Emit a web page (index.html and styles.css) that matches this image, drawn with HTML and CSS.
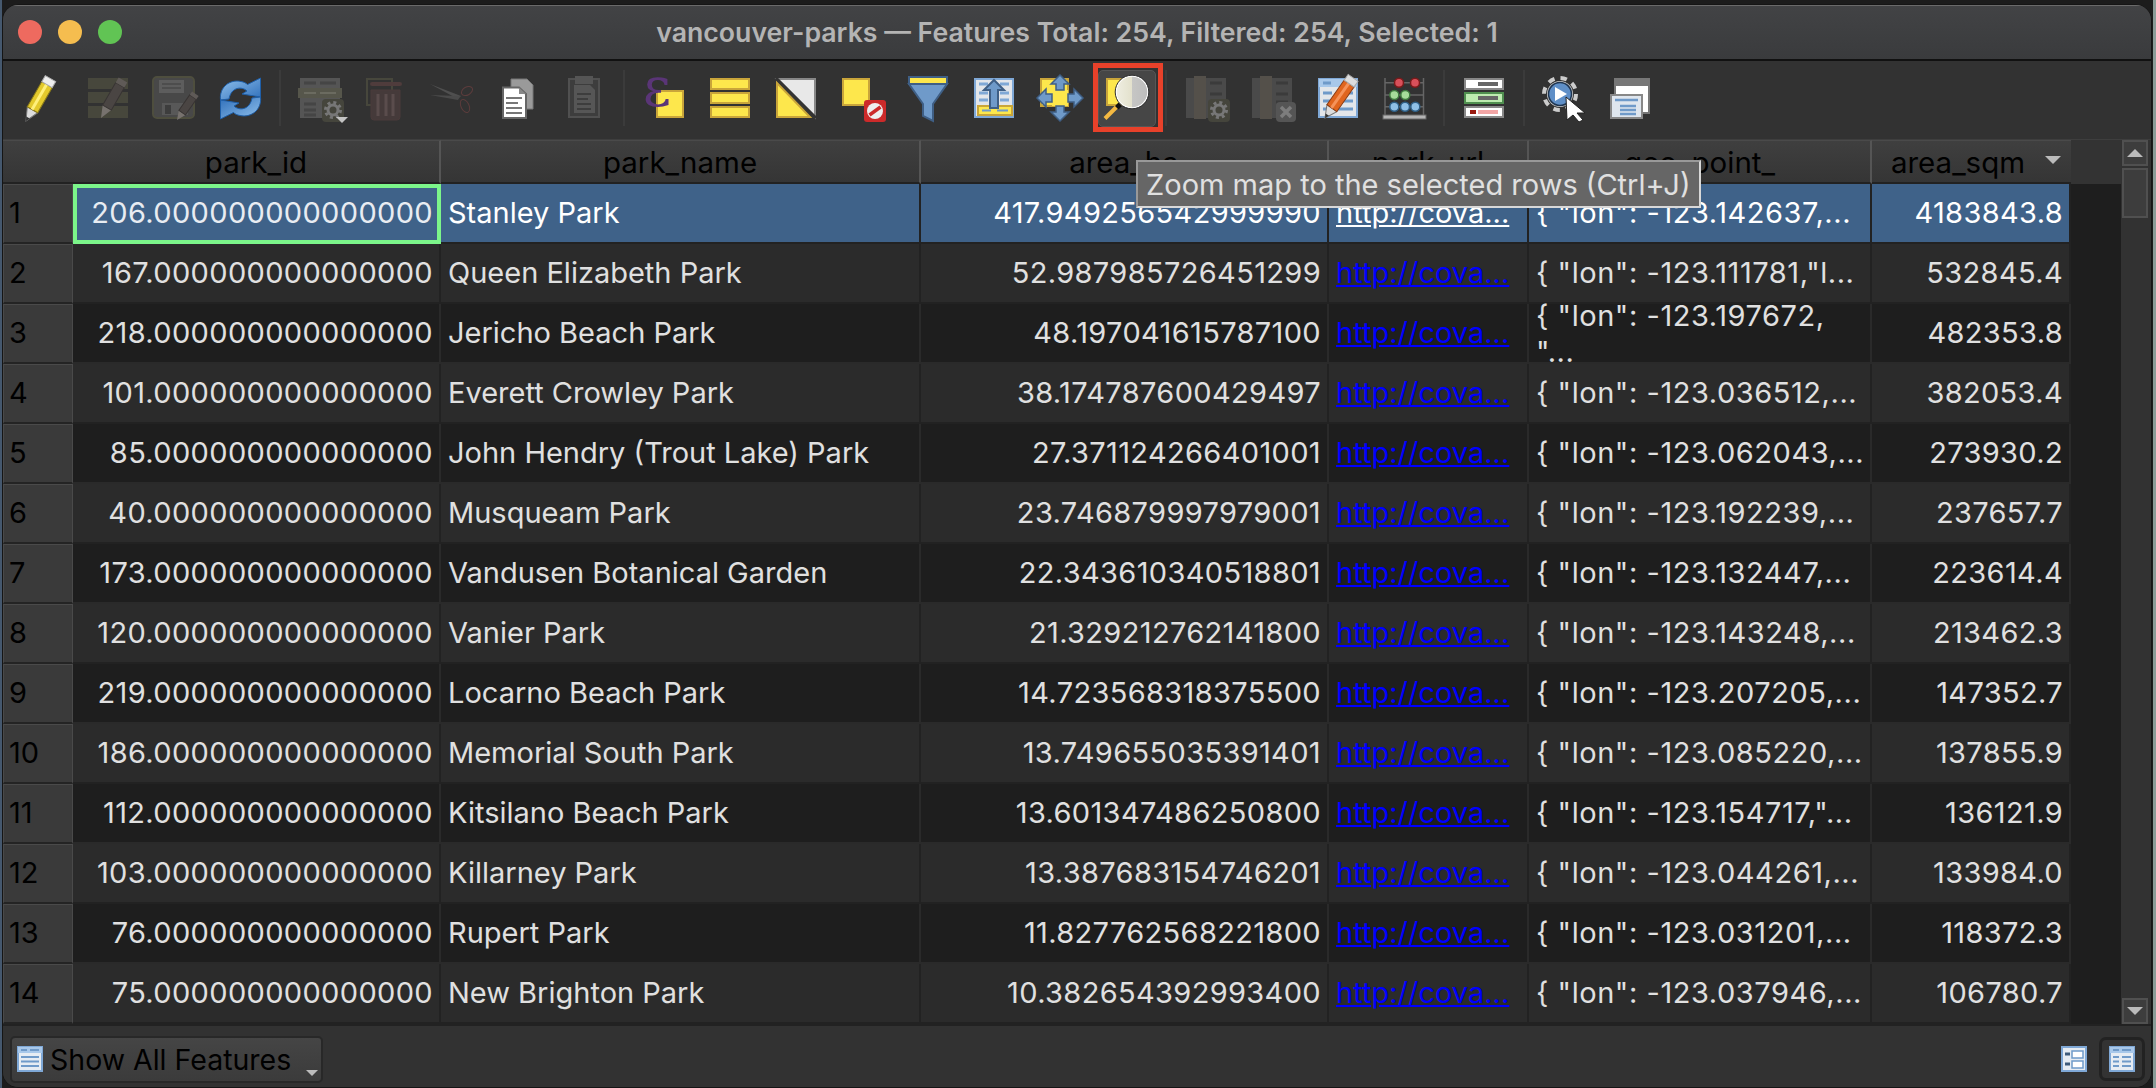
FILE: index.html
```html
<!DOCTYPE html>
<html lang="en">
  <head>
    <meta charset="UTF-8" />
    <title>vancouver-parks — Features Total: 254, Filtered: 254, Selected: 1</title>
    <link rel="stylesheet" href="styles.css">
  </head>
  <body>
    <div class="window">
      <div class="titlebar">
        <div class="lights">
          <span class="light red"></span>
          <span class="light yellow"></span>
          <span class="light green"></span>
        </div>
        <div class="title">vancouver-parks — Features Total: 254, Filtered: 254, Selected: 1</div>
      </div>

      <div class="toolbar">
        <!-- toggle editing -->
        <div class="tool"><svg class="ico" viewBox="0 0 48 48">
          <g transform="translate(8 47) rotate(30)">
            <path d="M0 0L-6 -13H6Z" fill="#ddd" stroke="#777"/>
            <path d="M0 0L-2 -4H2Z" fill="#333"/>
            <rect x="-6" y="-42" width="12" height="29" fill="#e3c92c" stroke="#8a7a1a"/>
            <rect x="-2" y="-42" width="3" height="29" fill="#fff07a"/>
            <rect x="-6" y="-49" width="12" height="7" fill="#eee" stroke="#aaa"/>
          </g>
        </svg></div>
        <!-- multi edit -->
        <div class="tool"><svg class="ico" viewBox="0 0 48 48">
          <rect x="4" y="4" width="40" height="11" fill="#47473c"/>
          <rect x="4" y="18" width="40" height="11" fill="#47473c"/>
          <rect x="4" y="32" width="40" height="12" fill="#47473c"/>
          <g transform="translate(17 44) rotate(30)">
            <path d="M0 0L-5 -12H5Z" fill="#77726e"/>
            <rect x="-5" y="-38" width="10" height="26" fill="#4a4543" stroke="#383433"/>
            <rect x="-5" y="-44" width="10" height="6" fill="#5f5a57"/>
          </g>
        </svg></div>
        <!-- save edits -->
        <div class="tool"><svg class="ico" viewBox="0 0 48 48">
          <rect x="3" y="3" width="41" height="41" rx="4" fill="#484848" stroke="#4e4e3e" stroke-width="2"/>
          <rect x="9" y="6" width="25" height="13" fill="#5d5d5d"/>
          <path d="M12 10H31M12 14H31" stroke="#484848" stroke-width="1.5"/>
          <rect x="12" y="29" width="26" height="12" fill="#585858"/>
          <rect x="15" y="31" width="6" height="9" fill="#3d3d3d"/>
          <g transform="translate(27 46) rotate(35)">
            <path d="M0 0L-4 -9H4Z" fill="#77726e"/>
            <rect x="-4" y="-28" width="8" height="19" fill="#4a4543" stroke="#383433"/>
            <rect x="-4" y="-32" width="8" height="4" fill="#5f5a57"/>
          </g>
        </svg></div>
        <!-- reload -->
        <div class="tool"><svg class="ico" viewBox="0 0 48 48">
          <defs>
            <linearGradient id="refresh" x1="0" y1="0" x2="1" y2="1">
              <stop offset="0" stop-color="#8fc0ec"/>
              <stop offset="1" stop-color="#2f6fba"/>
            </linearGradient>
          </defs>
          <path d="M4.500 26C3 13 14 5 25 7.500C28 8 30 9 31.500 10.500L44.500 4V23L26 20L31 17C26 12 15 13 13 25Z" fill="url(#refresh)" stroke="#1f5fa8"/>
          <g transform="rotate(180 24.500 24.500)">
            <path d="M4.500 26C3 13 14 5 25 7.500C28 8 30 9 31.500 10.500L44.500 4V23L26 20L31 17C26 12 15 13 13 25Z" fill="url(#refresh)" stroke="#1f5fa8"/>
          </g>
        </svg></div>
        <div class="sep"></div>
        <!-- add feature -->
        <div class="tool"><svg class="ico" viewBox="0 0 48 48">
          <rect x="4" y="4" width="40" height="40" fill="#555"/>
          <path d="M8 9H20M24 9H40M8 30H20M8 36H20M8 41H20" stroke="#454545" stroke-width="3"/>
          <rect x="2" y="14" width="44" height="10" fill="#56564b"/>
          <path d="M8 19H20M24 19H40" stroke="#6b6b60" stroke-width="2"/>
          <rect x="26" y="25" width="22" height="23" rx="4" fill="#45453c"/>
          <circle cx="37" cy="36" r="5" fill="none" stroke="#777" stroke-width="3"/>
          <circle cx="37" cy="36" r="7.500" fill="none" stroke="#777" stroke-width="3" stroke-dasharray="3 2.900"/>
          <path d="M40 43H52L46 49Z" fill="#c4c4c4"/>
        </svg></div>
        <!-- delete -->
        <div class="tool"><svg class="ico" viewBox="0 0 48 48">
          <rect x="5" y="5" width="25" height="26" fill="none" stroke="#47473c" stroke-width="2"/>
          <rect x="8" y="8" width="32" height="4" rx="2" fill="#4f3c3c"/>
          <path d="M9 16H38V43Q38 46 35 46H12Q9 46 9 43Z" fill="#453a3a" stroke="#4a3a3a"/>
          <path d="M16 20V42M24 20V42M31 20V42" stroke="#5a4c4c" stroke-width="3"/>
        </svg></div>
        <!-- cut -->
        <div class="tool"><svg class="ico" viewBox="0 0 48 48">
          <path d="M2 10L33 22L30 25Z" fill="#4f4f4f"/>
          <path d="M2 21L32 22L30 26Z" fill="#4a4a4a"/>
          <ellipse cx="39" cy="17" rx="6" ry="4" transform="rotate(-30 39 17)" fill="none" stroke="#5c3c3c"/>
          <ellipse cx="37" cy="32" rx="4" ry="7" transform="rotate(-25 37 32)" fill="none" stroke="#5c3c3c"/>
        </svg></div>
        <!-- copy -->
        <div class="tool"><svg class="ico" viewBox="0 0 48 48">
          <path d="M17 5H33L39 11V35H17Z" fill="#9a9a9a" stroke="#777"/>
          <path d="M9 13.500H25L32 20V44H9Z" fill="#fff" stroke="#666" stroke-width="2"/>
          <path d="M25 13.500V20H32Z" fill="#888"/>
          <path d="M12 24H28M12 29H24M12 34H28M12 39H28" stroke="#777" stroke-width="2"/>
        </svg></div>
        <!-- paste -->
        <div class="tool"><svg class="ico" viewBox="0 0 48 48">
          <rect x="9" y="5" width="30" height="38" fill="#3d3d3d" stroke="#505050" stroke-width="2"/>
          <rect x="15" y="2" width="18" height="8" fill="#555"/>
          <path d="M14 11H30L35 16V39H14Z" fill="#565656"/>
          <path d="M17 20H31M17 25H28M17 30H31M17 35H31" stroke="#3d3d3d" stroke-width="2"/>
        </svg></div>
        <div class="sep"></div>
        <!-- select by expression -->
        <div class="tool"><svg class="ico" viewBox="0 0 48 48">
          <rect x="17" y="17" width="26" height="26" fill="#fde74c" stroke="#c9a53a" stroke-width="2"/>
          <text class="epsilon" x="3" y="32">ε</text>
        </svg></div>
        <!-- select all -->
        <div class="tool"><svg class="ico" viewBox="0 0 48 48">
          <rect x="5" y="5" width="38" height="10" fill="#fde74c" stroke="#c9a53a" stroke-width="2"/>
          <rect x="5" y="19" width="38" height="10" fill="#fde74c" stroke="#c9a53a" stroke-width="2"/>
          <rect x="5" y="33" width="38" height="10" fill="#fde74c" stroke="#c9a53a" stroke-width="2"/>
        </svg></div>
        <!-- invert selection -->
        <div class="tool"><svg class="ico" viewBox="0 0 48 48">
          <path d="M5 5H43V43Z" fill="#e8e8e8" stroke="#888" stroke-width="2"/>
          <path d="M5 9V43H38Z" fill="#fde74c" stroke="#c9a53a" stroke-width="2"/>
          <path d="M4 4L44 44" stroke="#333" stroke-width="3"/>
        </svg></div>
        <!-- deselect -->
        <div class="tool"><svg class="ico" viewBox="0 0 48 48">
          <rect x="5" y="5" width="26" height="26" fill="#fde74c" stroke="#c9a53a" stroke-width="2"/>
          <rect x="26" y="26" width="22" height="22" rx="3" fill="#cc2a2a"/>
          <circle cx="37" cy="37" r="8" fill="#eee"/>
          <path d="M31.500 41L42.500 33" stroke="#cc2a2a" stroke-width="3.500"/>
        </svg></div>
        <!-- filter -->
        <div class="tool"><svg class="ico" viewBox="0 0 48 48">
          <path d="M5 10H43L29 30V47L19 42V30Z" fill="#6f9ac9" stroke="#3f5f85" stroke-width="2"/>
          <rect x="5" y="3" width="38" height="7" fill="#fde74c" stroke="#3f5f85" stroke-width="2"/>
        </svg></div>
        <!-- move selection to top -->
        <div class="tool"><svg class="ico" viewBox="0 0 48 48">
          <rect x="5" y="5" width="38" height="38" fill="#e3e6ea" stroke="#7fa8d6" stroke-width="2"/>
          <path d="M9 10H18M30 10H39M9 19H18M30 19H39M9 26H18M30 26H39" stroke="#7fa8d6" stroke-width="3"/>
          <rect x="8" y="32" width="34" height="9" fill="#fde74c" stroke="#c9a53a" stroke-width="2"/>
          <path d="M12 36.500H21M27 36.500H38" stroke="#6f9ac9" stroke-width="2"/>
          <path d="M24 6L34 16H28V34H20V16H14Z" fill="#6f9ac9" stroke="#3f5f85" stroke-width="2"/>
        </svg></div>
        <!-- pan to selection -->
        <div class="tool"><svg class="ico" viewBox="0 0 48 48">
          <rect x="5" y="5" width="27" height="27" fill="#fde74c" stroke="#c9a53a" stroke-width="2"/>
          <rect x="16" y="16" width="16" height="16" fill="#fde74c"/>
          <path d="M24 1L33 10H28V16H20V10H15Z" fill="#6f9ac9" stroke="#3f5f85" stroke-width="1.500"/>
          <path d="M24 47L33 38H28V32H20V38H15Z" fill="#6f9ac9" stroke="#3f5f85" stroke-width="1.500"/>
          <path d="M1 24L10 15V20H16V28H10V33Z" fill="#6f9ac9" stroke="#3f5f85" stroke-width="1.500"/>
          <path d="M47 24L38 15V20H32V28H38V33Z" fill="#6f9ac9" stroke="#3f5f85" stroke-width="1.500"/>
        </svg></div>
        <!-- zoom to selection, hovered and marked -->
        <div class="tool marked">
          <div class="hover-box"></div>
          <div class="red-box"></div>
          <svg class="ico" viewBox="0 0 48 48">
            <defs>
              <linearGradient id="lens" x1="0" y1="0" x2="1" y2="0">
                <stop offset="0" stop-color="#efeee2"/>
                <stop offset="0.500" stop-color="#e3e1cc"/>
                <stop offset="0.510" stop-color="#c6c6c4"/>
                <stop offset="1" stop-color="#bdbdbd"/>
              </linearGradient>
            </defs>
            <rect x="5" y="5" width="26" height="26" fill="#fde74c" stroke="#c9a53a" stroke-width="2"/>
            <path d="M3 44.500L15 32.500" stroke="#f4b942" stroke-width="4"/>
            <path d="M13 32L16.500 28.500L20 32L16.500 35.500Z" fill="#111"/>
            <circle cx="30" cy="18" r="16" fill="url(#lens)" stroke="#fff" stroke-width="1.500"/>
            <circle cx="30" cy="18" r="16.800" fill="none" stroke="#2b2b2b" stroke-width="1"/>
          </svg>
        </div>
        <div class="sep"></div>
        <!-- new field -->
        <div class="tool"><svg class="ico" viewBox="0 0 48 48">
          <rect x="4" y="4" width="40" height="40" fill="#4a4a4a"/>
          <path d="M28 9H40M28 20H40M28 28H40M28 36H40" stroke="#3b3b3b" stroke-width="3"/>
          <rect x="12" y="2" width="12" height="43" fill="#54504a"/>
          <rect x="26" y="25" width="22" height="23" rx="4" fill="#45453c"/>
          <circle cx="37" cy="36" r="5" fill="none" stroke="#777" stroke-width="3"/>
          <circle cx="37" cy="36" r="7.500" fill="none" stroke="#777" stroke-width="3" stroke-dasharray="3 2.900"/>
        </svg></div>
        <!-- delete field -->
        <div class="tool"><svg class="ico" viewBox="0 0 48 48">
          <rect x="4" y="4" width="40" height="40" fill="#4a4a4a"/>
          <path d="M28 9H40M28 20H40M28 28H40M28 36H40" stroke="#3b3b3b" stroke-width="3"/>
          <rect x="12" y="2" width="12" height="43" fill="#54504a"/>
          <rect x="28" y="28" width="20" height="20" rx="4" fill="#555"/>
          <path d="M33 33L43 43M43 33L33 43" stroke="#7d7d7d" stroke-width="3.500"/>
        </svg></div>
        <!-- field calculator bar -->
        <div class="tool"><svg class="ico" viewBox="0 0 48 48">
          <rect x="5" y="5" width="38" height="38" fill="#e3e6ea" stroke="#7fa8d6" stroke-width="2"/>
          <rect x="5" y="5" width="38" height="8" fill="#a8c8ea"/>
          <path d="M9 9H17M9 19H18M26 19H39M9 27H16M24 27H39M9 35H14M22 35H39" stroke="#6f9ac9" stroke-width="3"/>
          <g transform="translate(11 44) rotate(35)">
            <path d="M0 0L-6 -12H6Z" fill="#ddd" stroke="#777"/>
            <path d="M0 0L-2 -4H2Z" fill="#333"/>
            <rect x="-6" y="-42" width="12" height="30" fill="#e0651e" stroke="#8a3a10"/>
            <rect x="-2" y="-42" width="3" height="30" fill="#f5935a"/>
            <rect x="-6" y="-49" width="12" height="7" fill="#ddd" stroke="#aaa"/>
          </g>
        </svg></div>
        <!-- statistics abacus -->
        <div class="tool"><svg class="ico" viewBox="0 0 48 48">
          <path d="M5 4V42M43.500 4V42M5 8.700H43.500M5 21H43.500M5 32.700H43.500" stroke="#666" stroke-width="1.500"/>
          <rect x="3" y="41" width="43" height="4" fill="#b5b5b5" stroke="#666"/>
          <circle cx="19" cy="8.700" r="4.500" fill="#d9505a" stroke="#7a1a1a" stroke-width="1.500"/>
          <circle cx="35" cy="8.700" r="4.500" fill="#d9505a" stroke="#7a1a1a" stroke-width="1.500"/>
          <circle cx="14.300" cy="21" r="4.500" fill="#a6dc9a" stroke="#3f7a3f" stroke-width="1.500"/>
          <circle cx="25.300" cy="21" r="4.500" fill="#a6dc9a" stroke="#3f7a3f" stroke-width="1.500"/>
          <circle cx="14.300" cy="32.700" r="4.500" fill="#8fc0e6" stroke="#2f5f85" stroke-width="1.500"/>
          <circle cx="25" cy="32.700" r="4.500" fill="#8fc0e6" stroke="#2f5f85" stroke-width="1.500"/>
          <circle cx="35.300" cy="32.700" r="4.500" fill="#8fc0e6" stroke="#2f5f85" stroke-width="1.500"/>
        </svg></div>
        <div class="sep"></div>
        <!-- conditional formatting -->
        <div class="tool"><svg class="ico" viewBox="0 0 48 48">
          <rect x="5" y="5" width="38" height="10" fill="#fff" stroke="#888" stroke-width="2"/>
          <rect x="18" y="8" width="20" height="4" fill="#666"/>
          <rect x="5" y="19" width="38" height="10" fill="#bdeab0" stroke="#4f8f4f" stroke-width="2"/>
          <rect x="18" y="22" width="20" height="4" fill="#666"/>
          <rect x="5" y="33" width="38" height="10" fill="#fff" stroke="#888" stroke-width="2"/>
          <rect x="10" y="36" width="6" height="4" fill="#9a1a10"/>
          <rect x="18" y="36" width="20" height="4" fill="#f3a6a6"/>
        </svg></div>
        <div class="sep"></div>
        <!-- actions -->
        <div class="tool"><svg class="ico" viewBox="0 0 48 48">
          <circle cx="20" cy="20" r="13" fill="#ccc"/>
          <circle cx="20" cy="20" r="16" fill="none" stroke="#ccc" stroke-width="4" stroke-dasharray="6.500 6.070"/>
          <circle cx="20" cy="20" r="11.500" fill="#5f8fc7" stroke="#1f3550" stroke-width="1.500"/>
          <path d="M15 13L27 20L15 27Z" fill="#fff"/>
          <path d="M26 23L45 39L37 39L43 46L39 48L33 41L27 46Z" fill="#fff" stroke="#222"/>
        </svg></div>
        <!-- dock table -->
        <div class="tool"><svg class="ico" viewBox="0 0 48 48">
          <rect x="8" y="4" width="36" height="36" fill="#777"/>
          <rect x="10" y="12" width="32" height="26" fill="#fff"/>
          <rect x="5" y="21" width="31" height="23" fill="#dfe6ee" stroke="#888" stroke-width="2"/>
          <path d="M9 26H32M14 32H30M14 36H30M14 40H30" stroke="#6f9ac9" stroke-width="2.500"/>
        </svg></div>
      </div>

      <div class="table-area">
        <div class="table-box">
          <table class="attrs">
            <thead>
              <tr>
                <th class="corner"></th>
                <th>park_id</th>
                <th>park_name</th>
                <th>area_ha</th>
                <th>park_url</th>
                <th>geo_point_</th>
                <th class="sorted">area_sqm<span class="sort-arrow"></span></th>
              </tr>
            </thead>
            <tbody>
              <tr class="selected"><th>1</th><td class="num current">206.000000000000000</td><td>Stanley Park</td><td class="num">417.949256542999990</td><td><a href="#">http://cova...</a></td><td class="geo">{ "lon": -123.142637,...</td><td class="num">4183843.8</td></tr>
              <tr class="odd"><th>2</th><td class="num">167.000000000000000</td><td>Queen Elizabeth Park</td><td class="num">52.987985726451299</td><td><a href="#">http://cova...</a></td><td class="geo">{ "lon": -123.111781,"l...</td><td class="num">532845.4</td></tr>
              <tr><th>3</th><td class="num">218.000000000000000</td><td>Jericho Beach Park</td><td class="num">48.197041615787100</td><td><a href="#">http://cova...</a></td><td class="geo wrapped"><div class="lines">{ "lon": -123.197672,<br>"...</div></td><td class="num">482353.8</td></tr>
              <tr class="odd"><th>4</th><td class="num">101.000000000000000</td><td>Everett Crowley Park</td><td class="num">38.174787600429497</td><td><a href="#">http://cova...</a></td><td class="geo">{ "lon": -123.036512,...</td><td class="num">382053.4</td></tr>
              <tr><th>5</th><td class="num">85.000000000000000</td><td>John Hendry (Trout Lake) Park</td><td class="num">27.371124266401001</td><td><a href="#">http://cova...</a></td><td class="geo">{ "lon": -123.062043,...</td><td class="num">273930.2</td></tr>
              <tr class="odd"><th>6</th><td class="num">40.000000000000000</td><td>Musqueam Park</td><td class="num">23.746879997979001</td><td><a href="#">http://cova...</a></td><td class="geo">{ "lon": -123.192239,...</td><td class="num">237657.7</td></tr>
              <tr><th>7</th><td class="num">173.000000000000000</td><td>Vandusen Botanical Garden</td><td class="num">22.343610340518801</td><td><a href="#">http://cova...</a></td><td class="geo">{ "lon": -123.132447,...</td><td class="num">223614.4</td></tr>
              <tr class="odd"><th>8</th><td class="num">120.000000000000000</td><td>Vanier Park</td><td class="num">21.329212762141800</td><td><a href="#">http://cova...</a></td><td class="geo">{ "lon": -123.143248,...</td><td class="num">213462.3</td></tr>
              <tr><th>9</th><td class="num">219.000000000000000</td><td>Locarno Beach Park</td><td class="num">14.723568318375500</td><td><a href="#">http://cova...</a></td><td class="geo">{ "lon": -123.207205,...</td><td class="num">147352.7</td></tr>
              <tr class="odd"><th>10</th><td class="num">186.000000000000000</td><td>Memorial South Park</td><td class="num">13.749655035391401</td><td><a href="#">http://cova...</a></td><td class="geo">{ "lon": -123.085220,...</td><td class="num">137855.9</td></tr>
              <tr><th>11</th><td class="num">112.000000000000000</td><td>Kitsilano Beach Park</td><td class="num">13.601347486250800</td><td><a href="#">http://cova...</a></td><td class="geo">{ "lon": -123.154717,"...</td><td class="num">136121.9</td></tr>
              <tr class="odd"><th>12</th><td class="num">103.000000000000000</td><td>Killarney Park</td><td class="num">13.387683154746201</td><td><a href="#">http://cova...</a></td><td class="geo">{ "lon": -123.044261,...</td><td class="num">133984.0</td></tr>
              <tr><th>13</th><td class="num">76.000000000000000</td><td>Rupert Park</td><td class="num">11.827762568221800</td><td><a href="#">http://cova...</a></td><td class="geo">{ "lon": -123.031201,...</td><td class="num">118372.3</td></tr>
              <tr class="odd"><th>14</th><td class="num">75.000000000000000</td><td>New Brighton Park</td><td class="num">10.382654392993400</td><td><a href="#">http://cova...</a></td><td class="geo">{ "lon": -123.037946,...</td><td class="num">106780.7</td></tr>
            </tbody>
          </table>
        </div>
        <div class="scrollbar">
          <div class="sb-btn"><span class="tri up"></span></div>
          <div class="sb-handle"></div>
          <div class="sb-track"></div>
          <div class="sb-btn"><span class="tri down"></span></div>
        </div>
      </div>

      <div class="footer">
        <div class="combo">
          <svg class="mini" viewBox="0 0 26 26">
            <rect x="1" y="1" width="24" height="24" fill="#e6ecf3" stroke="#7fa8d6" stroke-width="2"/>
            <rect x="1" y="1" width="24" height="6" fill="#a8c8ea"/>
            <path d="M4 4H10M13 4H22M4 11H22M4 15.500H22M4 20H22" stroke="#6f9ac9" stroke-width="2"/>
          </svg>
          <span class="combo-text">Show All Features</span>
          <span class="combo-arrow"></span>
        </div>
        <div class="view-btns">
          <svg class="mini" viewBox="0 0 26 26">
            <rect x="1" y="1" width="24" height="24" fill="#e6ecf3" stroke="#7fa8d6" stroke-width="2"/>
            <path d="M4 8H9M4 18H9" stroke="#3d5a7a" stroke-width="3"/>
            <rect x="11" y="5" width="11" height="7" fill="#fff" stroke="#6f9ac9" stroke-width="1.500"/>
            <rect x="11" y="15" width="11" height="7" fill="#fff" stroke="#6f9ac9" stroke-width="1.500"/>
          </svg>
          <div class="view-active">
            <svg class="mini" viewBox="0 0 26 26">
              <rect x="1" y="1" width="24" height="24" fill="#e6ecf3" stroke="#7fa8d6" stroke-width="2"/>
              <rect x="1" y="1" width="24" height="6" fill="#a8c8ea"/>
              <path d="M4 4H10M13 4H22M4 11H10M13 11H22M4 15.500H10M13 15.500H22M4 20H10M13 20H22" stroke="#6f9ac9" stroke-width="2"/>
            </svg>
          </div>
        </div>
      </div>

      <div class="tooltip">Zoom map to the selected rows (Ctrl+J)</div>
    </div>
  </body>
</html>
```

FILE: styles.css
```css
html,
body {
  margin: 0;
  padding: 0;
  height: 100%;
  overflow: hidden;
}

body {
  background: linear-gradient(90deg, #45586e 0, #45586e 2px, #1c1c1c 2px, #1c1c1c 2153px, #8a9c98 2153px);
  font-family: Inter, "Noto Sans", sans-serif;
}

.window {
  position: relative;
  box-sizing: border-box;
  width: 2150px;
  height: 1084px;
  margin: 4px 0 0 2px;
  border: 1px solid #151515;
  border-radius: 16px;
  overflow: hidden;
  background: #323232;
  display: flex;
  flex-direction: column;
}

.titlebar {
  height: 56px;
  flex: none;
  box-sizing: border-box;
  display: flex;
  align-items: center;
  position: relative;
  padding-bottom: 2px;
  background: linear-gradient(#424345, #3a3b3d);
  border-top: 1px solid #6a6a6a;
  border-bottom: 2px solid #111;
}

.lights {
  display: flex;
  gap: 16px;
  padding-left: 15px;
  position: absolute;
  left: 0;
}

.light {
  display: block;
  width: 24px;
  height: 24px;
  border-radius: 50%;
}

.red { background-color: #ee6a5f; }
.yellow { background-color: #f5bd4f; }
.green { background-color: #61c454; }

.title {
  flex: 1;
  text-align: center;
  color: #b4b4b4;
  font-size: 26.7px;
  font-weight: 600;
}

.toolbar {
  height: 79px;
  flex: none;
  box-sizing: border-box;
  display: flex;
  align-items: center;
  padding-left: 6px;
  padding-bottom: 4px;
  background-color: #323232;
  border-bottom: 1px solid #3e3e3e;
}

.tool {
  width: 66px;
  flex: none;
  display: flex;
  justify-content: center;
  position: relative;
}

.ico {
  width: 48px;
  height: 48px;
  overflow: visible;
  position: relative;
}

.epsilon {
  font-family: "DejaVu Serif", serif;
  font-size: 54px;
  fill: #5a3577;
}

.sep {
  width: 14px;
  height: 56px;
  flex: none;
  background: linear-gradient(#3b3b3b, #3b3b3b) center / 2px 100% no-repeat;
}

.hover-box {
  position: absolute;
  left: 5px;
  top: -4px;
  width: 58px;
  height: 57px;
  box-sizing: border-box;
  background-color: #464646;
  border: 1px solid #565656;
  border-radius: 5px;
}

.red-box {
  position: absolute;
  left: 0;
  top: -11px;
  width: 70px;
  height: 69px;
  box-sizing: border-box;
  border: 5px solid #e8412a;
}

.table-area {
  flex: 1;
  min-height: 0;
  display: flex;
  background-color: #1e1e1e;
}

.table-box {
  flex: 1;
  overflow: hidden;
  background: linear-gradient(#333, #333) top / 100% 44px no-repeat;
}

.attrs {
  table-layout: fixed;
  width: 2068px;
  border-collapse: separate;
  border-spacing: 0;
  font-size: 29px;
  color: #e0e0e0;
}

.attrs thead th {
  height: 44px;
  padding: 0;
  box-sizing: border-box;
  font-size: 29.5px;
  font-weight: 400;
  color: #000;
  text-align: center;
  background: linear-gradient(#3f3f3f, #353535);
  border-top: 1px solid #4a4a4a;
  border-right: 2px solid #555;
  border-bottom: 2px solid #222;
  position: relative;
}

.attrs thead .corner { width: 70px; border-right: none; }
.attrs thead th:nth-child(2) { width: 368px; }
.attrs thead th:nth-child(3) { width: 480px; }
.attrs thead th:nth-child(4) { width: 408px; }
.attrs thead th:nth-child(5) { width: 200px; }
.attrs thead th:nth-child(6) { width: 343px; }
.attrs thead th:nth-child(7) { width: 199px; border-right: none; }

.attrs thead .sorted {
  padding-right: 27px;
}

.sort-arrow {
  position: absolute;
  right: 10px;
  top: 15px;
  border-left: 8px solid transparent;
  border-right: 8px solid transparent;
  border-top: 8px solid #bbb;
}

.attrs tbody th {
  height: 60px;
  padding: 0 0 2px 5px;
  box-sizing: border-box;
  font-size: 29px;
  font-weight: 400;
  color: #000;
  text-align: left;
  background-color: #3a3a3a;
  border: 1px solid #4a4a4a;
  border-bottom: 2px solid #242424;
}

.attrs td {
  height: 60px;
  padding: 0 6px 2px 7px;
  box-sizing: border-box;
  white-space: nowrap;
  overflow: hidden;
  background-color: #1e1e1e;
  border-right: 2px solid #2a2a2a;
  border-bottom: 2px solid #2a2a2a;
}

.attrs .odd td {
  background-color: #2b2b2b;
  border-color: #222;
}

.attrs .num {
  text-align: right;
  letter-spacing: 0.35px;
}

.attrs .geo {
  letter-spacing: 0.55px;
}

.attrs a {
  color: #0000ff;
  text-decoration: underline;
}

.attrs .selected td {
  background-color: #3f6289;
  color: #fff;
  border-color: #222;
}

.attrs .selected a {
  color: #fff;
}

.attrs .selected .current {
  color: #e8ecf2;
  outline: 4px solid #7cf58a;
  outline-offset: -4px;
}

.attrs .wrapped {
  overflow: visible;
  vertical-align: top;
}

.lines {
  height: 52px;
  margin-top: -6px;
  line-height: 36px;
}

.scrollbar {
  width: 30px;
  flex: none;
  box-sizing: border-box;
  padding: 0 3px 0 1px;
  display: flex;
  flex-direction: column;
  gap: 2px;
  background-color: #323232;
}

.sb-btn {
  height: 26px;
  flex: none;
  box-sizing: border-box;
  background-color: #3d3d3d;
  border: 2px solid #505050;
  display: flex;
  align-items: center;
  justify-content: center;
}

.sb-handle {
  height: 50px;
  flex: none;
  box-sizing: border-box;
  background-color: #3d3d3d;
  border: 2px solid #505050;
}

.sb-track {
  flex: 1;
}

.tri {
  display: block;
  border-left: 8px solid transparent;
  border-right: 8px solid transparent;
}

.tri.up { border-bottom: 8px solid #bbb; }
.tri.down { border-top: 8px solid #bbb; }

.footer {
  height: 63px;
  flex: none;
  box-sizing: border-box;
  display: flex;
  align-items: center;
  justify-content: space-between;
  padding: 5px 6px 0 7px;
  background-color: #323232;
  border-top: 2px solid #222;
}

.mini {
  width: 26px;
  height: 26px;
  flex: none;
}

.combo {
  width: 313px;
  height: 47px;
  box-sizing: border-box;
  display: flex;
  align-items: center;
  gap: 7px;
  padding-left: 5px;
  position: relative;
  background: linear-gradient(#454545, #3b3b3b);
  border: 2px solid #282828;
  border-radius: 5px;
}

.combo-text {
  color: #000;
  font-size: 28.5px;
}

.combo-arrow {
  position: absolute;
  right: 3px;
  bottom: 5px;
  border-left: 6px solid transparent;
  border-right: 6px solid transparent;
  border-top: 6px solid #bbb;
}

.view-btns {
  display: flex;
  align-items: center;
  gap: 12px;
}

.view-active {
  width: 46px;
  height: 44px;
  box-sizing: border-box;
  display: flex;
  align-items: center;
  justify-content: center;
  background-color: #333;
  border: 3px solid #222;
  border-radius: 7px;
}

.tooltip {
  position: absolute;
  left: 1133px;
  top: 155px;
  width: 565px;
  height: 48px;
  box-sizing: border-box;
  display: flex;
  align-items: center;
  padding-left: 8px;
  white-space: nowrap;
  font-size: 29px;
  color: #e0e0e0;
  background-color: #666;
  border: 2px solid #d8d8d8;
  border-top-color: #999;
  border-left-color: #999;
}
```
